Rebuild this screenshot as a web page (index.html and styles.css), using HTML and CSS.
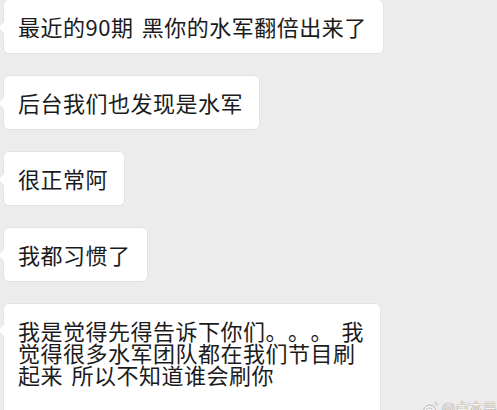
FILE: index.html
```html
<!DOCTYPE html>
<html lang="zh-CN">
<head>
    <meta charset="UTF-8">
    <meta name="viewport" content="width=device-width, initial-scale=1.0">
    <title>聊天记录</title>
    <link rel="stylesheet" href="styles.css">
</head>
<body>
    <div class="chat">
        <!-- 对方发来的消息 -->
        <div class="bubble">最近的90期 黑你的水军翻倍出来了</div>
        <div class="bubble">后台我们也发现是水军</div>
        <div class="bubble">很正常阿</div>
        <div class="bubble">我都习惯了</div>
        <div class="bubble bubble-long">我是觉得先得告诉下你们。。。 我<br>觉得很多水军团队都在我们节目刷<br>起来 所以不知道谁会刷你</div>
    </div>

    <!-- 水印 -->
    <div class="watermark">
        <svg class="wb-logo" width="16" height="13" viewBox="0 0 16 13">
            <path d="M6.5 4.2C3.6 4.4 1 6.2 1 8.4 1 10.6 3.6 12 6.6 12c3.3 0 5.9-1.6 5.9-3.4 0-1-.9-1.6-1.7-1.8.4-.8.5-1.7-.2-2.1-.8-.4-2.1 0-2.7.3.2-.7 0-1.5-1.4-.8z" fill="#f6f6f6" stroke="#a8a8a8" stroke-width="0.8"/>
            <ellipse cx="6.3" cy="8.7" rx="2.6" ry="1.8" fill="none" stroke="#a8a8a8" stroke-width="0.8"/>
            <path d="M11.5 1.5c1.6.1 2.8 1.4 2.7 3" fill="none" stroke="#a8a8a8" stroke-width="0.9"/>
        </svg>
        <span>@卢本昊</span>
    </div>
</body>
</html>
```

FILE: styles.css
```css
body {
    margin: 0;
    height: 410px;
    overflow: hidden;
    background-color: #ececec;
    font-family: "Noto Sans CJK SC", "Noto Sans", sans-serif;
    color: #1b1b1b;
    position: relative;
}
.chat {
    display: flex;
    flex-direction: column;
    align-items: flex-start;
    gap: 21px;
    padding-left: 3px;
    margin-top: -1px;
}
.bubble {
    position: relative;
    background-color: #fff;
    border: 1px solid #e2e2e2;
    border-radius: 6px;
    padding: 15px 16px 16px 14px;
    font-size: 22px;
    line-height: 22px;
    letter-spacing: 0.5px;
    word-spacing: 3px;
    white-space: nowrap;
    text-spacing-trim: space-all;
}
.bubble::before {
    content: "";
    position: absolute;
    left: -5px;
    top: 50%;
    width: 8px;
    height: 8px;
    margin-top: -4px;
    background-color: #fff;
    border-left: 1px solid #e6e6e6;
    border-bottom: 1px solid #e6e6e6;
    transform: rotate(45deg);
    border-radius: 0 0 0 3px;
}
.bubble-long {
    padding-bottom: 30px;
}
.bubble-long::before {
    top: 26px;
}
.watermark {
    position: absolute;
    right: 0;
    bottom: -7px;
    display: flex;
    align-items: center;
    gap: 2px;
    font-size: 14px;
    color: #f4f4f4;
    text-shadow: 0 0 1px #8a8a8a, 0 0 1px #8a8a8a;
}
.wb-logo {
    margin-right: 1px;
}
```
